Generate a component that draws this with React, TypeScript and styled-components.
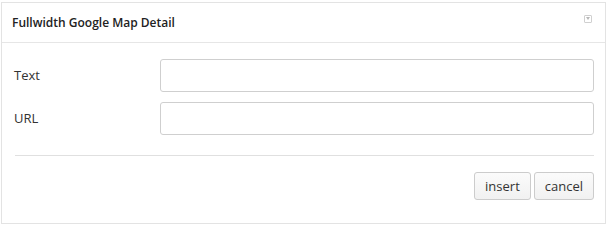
import React from "react";
import styled, { createGlobalStyle } from "styled-components";

const Global = createGlobalStyle`
  html, body { margin: 0; padding: 0; background: #ffffff; }
  body { font-family: "Open Sans", "Liberation Sans", Arial, sans-serif; }
  * { box-sizing: border-box; }
`;

const Panel = styled.div`
  margin: 2px 0 0 1px;
  width: 605px;
  height: 222px;
  border: 1px solid #e3e3e3;
  background: #fff;
  display: flex;
  flex-direction: column;
`;

const Header = styled.div`
  height: 40px;
  border-bottom: 1px solid #e6e6e6;
  display: flex;
  align-items: center;
  justify-content: space-between;
  padding: 0 12px 0 10px;
`;

const Title = styled.h3`
  margin: 0;
  font-size: 12px;
  font-weight: 600;
  color: #222;
`;

const Toggle = styled.span`
  width: 8px;
  height: 8px;
  border: 1px solid #d0d0d0;
  border-radius: 1px;
  display: flex;
  align-items: center;
  justify-content: center;
  margin-top: -8px;
  margin-right: 1px;
  &::after {
    content: "";
    border-left: 2px solid transparent;
    border-right: 2px solid transparent;
    border-top: 3px solid #b8b8b8;
  }
`;

const Body = styled.div`
  padding: 16px 11px 0 12px;
  display: flex;
  flex-direction: column;
`;

const Fields = styled.div`
  display: grid;
  grid-template-columns: 146px 1fr;
  row-gap: 10px;
  align-items: center;
`;

const Label = styled.label`
  font-size: 13px;
  color: #333;
  padding-bottom: 2px;
`;

const Input = styled.input`
  height: 33px;
  width: 100%;
  border: 1px solid #cfcfcf;
  border-radius: 3px;
  background: #fff;
  outline: none;
`;

const Rule = styled.hr`
  margin: 20px 0 0 1px;
  border: 0;
  border-top: 1px solid #e0e0e0;
`;

const Actions = styled.div`
  display: flex;
  justify-content: flex-end;
  gap: 3px;
  margin-top: 16px;
`;

const Button = styled.button`
  height: 28px;
  padding: 0 10px;
  font-family: "Open Sans", "Liberation Sans", Arial, sans-serif;
  font-size: 13px;
  color: #333;
  background: linear-gradient(#fbfbfb, #f1f1f1);
  border: 1px solid #cccccc;
  border-radius: 3px;
  cursor: pointer;
`;

export default function App() {
  return (
    <>
      <Global />
      <Panel>
        <Header>
          <Title>Fullwidth Google Map Detail</Title>
          <Toggle />
        </Header>
        <Body>
          <Fields>
            <Label>Text</Label>
            <Input type="text" />
            <Label>URL</Label>
            <Input type="text" />
          </Fields>
          <Rule />
          <Actions>
            <Button>insert</Button>
            <Button>cancel</Button>
          </Actions>
        </Body>
      </Panel>
    </>
  );
}
